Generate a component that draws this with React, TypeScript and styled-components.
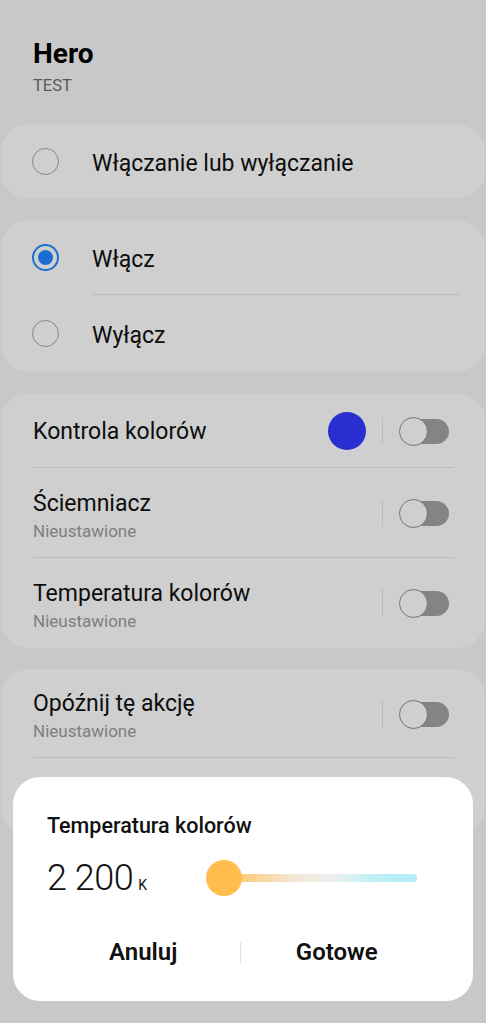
import React from 'react'
import styled, { createGlobalStyle } from 'styled-components'

const GlobalStyle = createGlobalStyle`
    html, body {
        margin: 0;
        padding: 0;
        background: #f5f5f5;
        font-family: Roboto, 'Noto Sans', 'Liberation Sans', sans-serif;
        color: #111;
    }
    body {
        height: 1023px;
        overflow: hidden;
    }
`

const Page = styled.div`
    display: flex;
    flex-direction: column;
    gap: 21px;
    padding: 0 1px;
`

const Header = styled.div`
    display: flex;
    flex-direction: column;
    padding: 37px 32px 0;
    height: 103px;
    box-sizing: border-box;
`

const Title = styled.h1`
    margin: 0;
    font-size: 28px;
    line-height: 34px;
    font-weight: 700;
    color: #000;
`

const Subtitle = styled.div`
    font-size: 16.5px;
    line-height: 22px;
    color: #6e6e6e;
    margin-top: 4px;
`

const Card = styled.section`
    background: #fdfdfd;
    border-radius: 28px;
    display: flex;
    flex-direction: column;
`

const OptionRow = styled.div<{ $height: number; $divider?: boolean }>`
    height: ${(p) => p.$height}px;
    display: flex;
    align-items: center;
    gap: 33px;
    padding-left: 31px;
    position: relative;
    box-sizing: border-box;
    ${(p) =>
        p.$divider &&
        `&::after {
            content: '';
            position: absolute;
            left: 91px;
            right: 26px;
            bottom: 0;
            height: 1px;
            background: #e4e4e4;
        }`}
`

const Radio = styled.span<{ $checked?: boolean }>`
    width: 27px;
    height: 27px;
    border-radius: 50%;
    box-sizing: border-box;
    border: ${(p) => (p.$checked ? '2px solid #2088ff' : '1.5px solid #a3a3a3')};
    display: flex;
    align-items: center;
    justify-content: center;
    flex-shrink: 0;
    &::after {
        content: '';
        display: ${(p) => (p.$checked ? 'block' : 'none')};
        width: 15px;
        height: 15px;
        border-radius: 50%;
        background: #2088ff;
    }
`

const OptionLabel = styled.span`
    font-size: 23px;
    line-height: 28px;
    padding-top: 4px;
    color: #111;
`

const SettingRow = styled.div<{ $height: number; $divider?: boolean }>`
    height: ${(p) => p.$height}px;
    display: flex;
    align-items: center;
    padding: 0 36px 0 32px;
    position: relative;
    box-sizing: border-box;
    ${(p) =>
        p.$divider &&
        `&::after {
            content: '';
            position: absolute;
            left: 32px;
            right: 31px;
            bottom: 0;
            height: 1px;
            background: #e4e4e4;
        }`}
`

const SettingText = styled.div`
    flex: 1;
    display: flex;
    flex-direction: column;
    min-width: 0;
`

const SettingTitle = styled.span`
    font-size: 23px;
    line-height: 30px;
    padding-top: 3px;
    color: #111;
`

const SettingSub = styled.span`
    font-size: 17px;
    line-height: 20px;
    color: #9a9a9a;
    margin-top: 2px;
`

const ColorDot = styled.span<{ $color: string }>`
    width: 38px;
    height: 38px;
    border-radius: 50%;
    background: ${(p) => p.$color};
    margin-right: 16px;
`

const VLine = styled.span`
    width: 1px;
    height: 28px;
    background: #e6e6e6;
    margin-right: 16px;
`

const Switch = styled.span`
    position: relative;
    width: 50px;
    height: 28px;
    display: inline-block;
    &::before {
        content: '';
        position: absolute;
        left: 10px;
        right: 0;
        top: 2px;
        height: 25px;
        border-radius: 13px;
        background: #a2a2a2;
    }
    &::after {
        content: '';
        position: absolute;
        left: 0;
        top: 0;
        width: 29px;
        height: 29px;
        box-sizing: border-box;
        border-radius: 50%;
        border: 1.5px solid #8e8e8e;
        background: #fdfdfd;
    }
`

const Scrim = styled.div`
    position: fixed;
    inset: 0;
    background: rgba(0, 0, 0, 0.18);
`

const Dialog = styled.div`
    position: fixed;
    left: 13px;
    right: 13px;
    top: 777px;
    height: 224px;
    background: #fff;
    border-radius: 27px;
    padding: 35px 40px 0 34px;
    box-sizing: border-box;
    display: flex;
    flex-direction: column;
`

const DialogTitle = styled.div`
    font-size: 21.5px;
    font-weight: 500;
    line-height: 28px;
    color: #111;
`

const ValueRow = styled.div`
    display: flex;
    align-items: center;
    margin-top: 18px;
    height: 40px;
`

const Value = styled.div`
    width: 160px;
    display: flex;
    align-items: baseline;
    font-size: 36px;
    font-weight: 300;
    color: #111;
    letter-spacing: -0.5px;
`

const Unit = styled.span`
    font-size: 14px;
    font-weight: 400;
    margin-left: 5px;
`

const Slider = styled.div`
    position: relative;
    width: 229px;
    height: 36px;
    display: flex;
    align-items: center;
`

const Track = styled.div`
    margin-left: 18px;
    width: 193px;
    height: 8px;
    border-radius: 4px;
    background: linear-gradient(90deg, #ffc35f 0%, #f3e6cf 35%, #eef1f1 55%, #bdeff7 80%, #b2ecf7 100%);
`

const Thumb = styled.div`
    position: absolute;
    left: 0;
    top: 0;
    width: 36px;
    height: 36px;
    border-radius: 50%;
    background: #ffbd4d;
`

const Buttons = styled.div`
    display: flex;
    align-items: center;
    margin-top: 39px;
`

const Button = styled.button`
    flex: 1;
    border: 0;
    background: none;
    font-family: inherit;
    font-size: 24px;
    font-weight: 600;
    color: #111;
    padding: 0;
    height: 30px;
`

const ButtonDivider = styled.span`
    width: 1px;
    height: 21px;
    background: #e2e2e2;
`

const App = () => {
    return (
        <>
            <GlobalStyle />
            <Page>
                <Header>
                    <Title>Hero</Title>
                    <Subtitle>TEST</Subtitle>
                </Header>
                <Card>
                    <OptionRow $height={75}>
                        <Radio />
                        <OptionLabel>Włączanie lub wyłączanie</OptionLabel>
                    </OptionRow>
                </Card>
                <Card>
                    <OptionRow $height={75} $divider>
                        <Radio $checked />
                        <OptionLabel>Włącz</OptionLabel>
                    </OptionRow>
                    <OptionRow $height={77}>
                        <Radio />
                        <OptionLabel>Wyłącz</OptionLabel>
                    </OptionRow>
                </Card>
                <Card>
                    <SettingRow $height={75} $divider>
                        <SettingText>
                            <SettingTitle>Kontrola kolorów</SettingTitle>
                        </SettingText>
                        <ColorDot $color='#3439ff' />
                        <VLine />
                        <Switch />
                    </SettingRow>
                    <SettingRow $height={90} $divider>
                        <SettingText>
                            <SettingTitle>Ściemniacz</SettingTitle>
                            <SettingSub>Nieustawione</SettingSub>
                        </SettingText>
                        <VLine />
                        <Switch />
                    </SettingRow>
                    <SettingRow $height={90}>
                        <SettingText>
                            <SettingTitle>Temperatura kolorów</SettingTitle>
                            <SettingSub>Nieustawione</SettingSub>
                        </SettingText>
                        <VLine />
                        <Switch />
                    </SettingRow>
                </Card>
                <Card>
                    <SettingRow $height={89} $divider>
                        <SettingText>
                            <SettingTitle>Opóźnij tę akcję</SettingTitle>
                            <SettingSub>Nieustawione</SettingSub>
                        </SettingText>
                        <VLine />
                        <Switch />
                    </SettingRow>
                    <SettingRow $height={77} />
                </Card>
            </Page>
            <Scrim />
            <Dialog>
                <DialogTitle>Temperatura kolorów</DialogTitle>
                <ValueRow>
                    <Value>
                        2 200<Unit>K</Unit>
                    </Value>
                    <Slider>
                        <Track />
                        <Thumb />
                    </Slider>
                </ValueRow>
                <Buttons>
                    <Button>Anuluj</Button>
                    <ButtonDivider />
                    <Button>Gotowe</Button>
                </Buttons>
            </Dialog>
        </>
    )
}

export default App
